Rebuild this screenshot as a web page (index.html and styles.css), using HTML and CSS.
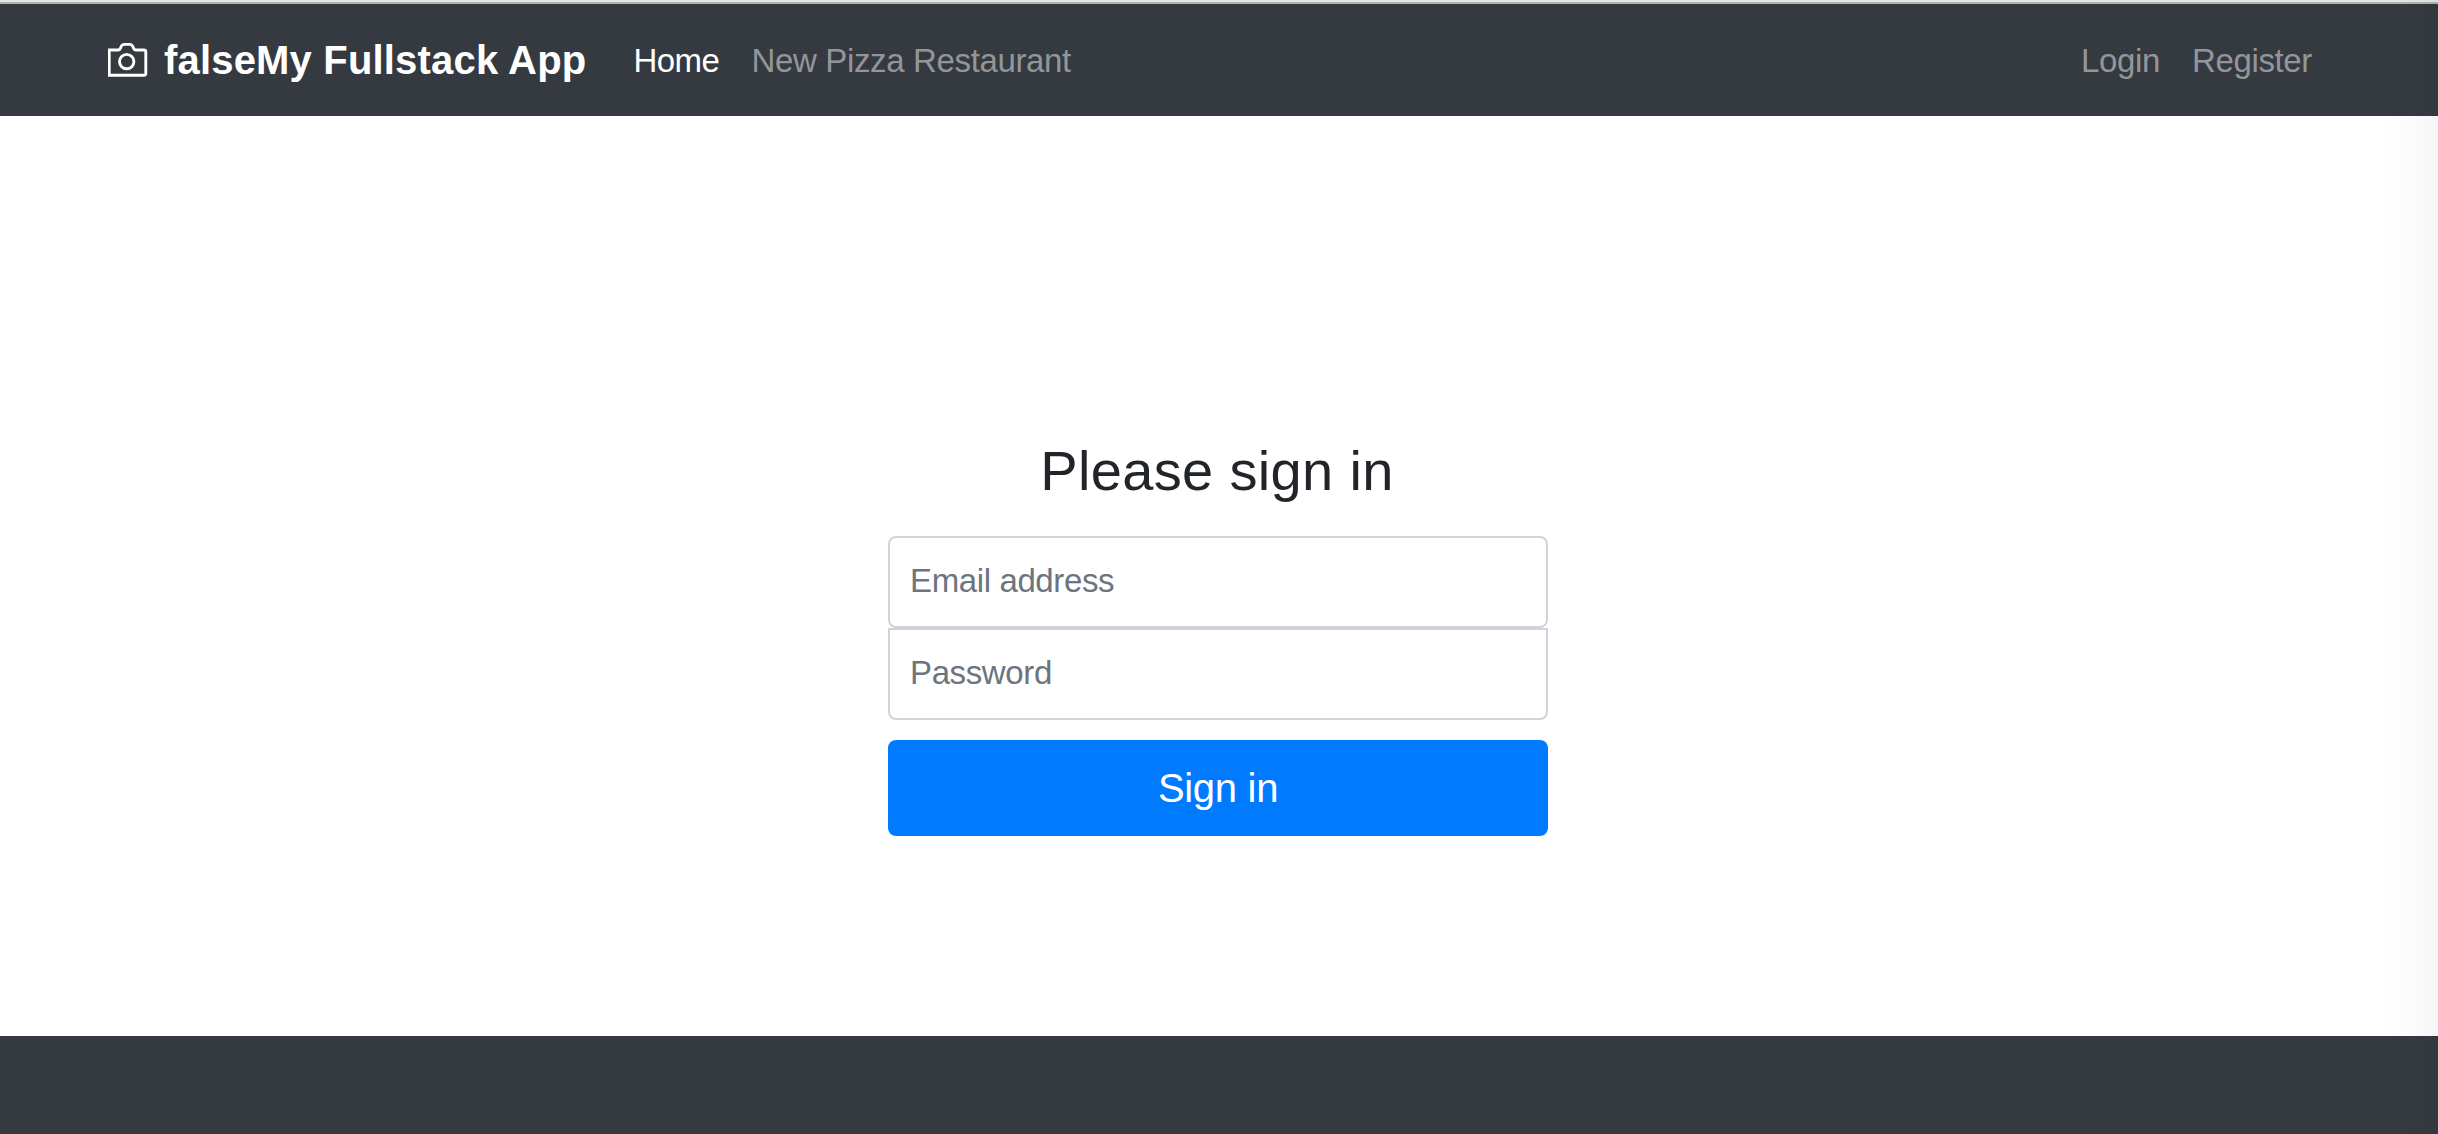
FILE: index.html
```html
<!DOCTYPE html>
<html lang="en">
<head>
<meta charset="utf-8">
<title>My Fullstack App</title>
<link rel="stylesheet" href="styles.css">
</head>
<body>
<header class="navbar">
  <a class="brand">
    <svg class="brand-icon" viewBox="0 0 40 40" fill="none" stroke="currentColor" stroke-width="2.900"><path d="M1.200 11h9c2 0 2-1.500 2.700-3 .8-2 1.600-2.600 3.400-2.600h5.400c1.800 0 2.600.6 3.400 2.600.7 1.500.7 3 2.700 3h8c1.300 0 2 .7 2 2v21.500c0 1.200-.6 1.700-1.800 1.700H1.200z"/><circle cx="18.700" cy="22.600" r="7.200"/></svg>
    <strong class="brand-name">falseMy Fullstack App</strong>
  </a>
  <nav class="nav nav-main">
    <a class="nav-link active">Home</a>
    <a class="nav-link">New Pizza Restaurant</a>
  </nav>
  <nav class="nav">
    <a class="nav-link">Login</a>
    <a class="nav-link">Register</a>
  </nav>
</header>
<main class="content">
  <form class="form-signin">
    <h1 class="title">Please sign in</h1>
    <input class="field" type="email" placeholder="Email address">
    <input class="field field-last" type="password" placeholder="Password">
    <button class="submit" type="button">Sign in</button>
  </form>
</main>
<footer class="footer"></footer>
<div class="edge-shade"></div>
</body>
</html>
```
FILE: styles.css
```css
* { box-sizing: border-box; }
body {
  margin: 0;
  height: 1134px;
  display: flex;
  flex-direction: column;
  overflow: hidden;
  border-top: 2px solid #e6e7e5;
  background: #fff;
  color: #212529;
  font: 33px/48px "Liberation Sans", Arial, sans-serif;
}
.navbar {
  height: 114px;
  flex: none;
  display: flex;
  align-items: center;
  padding: 0 110px 0 108px;
  background: #343a40;
  border-top: 2px solid #b1b3ad;
}
.brand {
  display: flex;
  align-items: center;
  gap: 16px;
  margin-right: 31px;
  color: #fff;
}
.brand-icon { width: 40px; height: 40px; margin-bottom: 2px; }
.brand-name {
  font-size: 40px;
  line-height: 60px;
  letter-spacing: .18px;
  white-space: nowrap;
}
.nav { display: flex; padding-top: 2px; }
.nav-main { margin-right: auto; }
.nav-link {
  padding: 0 16px;
  color: rgba(255, 255, 255, .48);
  letter-spacing: -.35px;
  white-space: nowrap;
}
.nav-link.active { color: #fff; letter-spacing: -.5px; }
.content {
  flex: 1;
  display: flex;
  justify-content: center;
  align-items: flex-start;
  padding-top: 321px;
}
.form-signin {
  width: 660px;
  margin-right: 2px;
  display: flex;
  flex-direction: column;
}
.title {
  margin: 0 2px 32px 0;
  font-size: 56px;
  line-height: 67px;
  font-weight: 400;
  letter-spacing: .35px;
  text-align: center;
}
.field {
  width: 100%;
  height: 92px;
  margin: 0;
  padding: 0 20px 2px;
  border: 2px solid #ced4da;
  border-radius: 8px;
  background: #fff;
  font: inherit;
  letter-spacing: -.38px;
}
.field::placeholder { color: #6c757d; opacity: 1; }
.field-last {
  margin-bottom: 20px;
  border-radius: 0 0 8px 8px;
}
.submit {
  height: 96px;
  padding: 0;
  border: 0;
  border-radius: 8px;
  background: #007bff;
  color: #fff;
  font: 40px/60px "Liberation Sans", Arial, sans-serif;
  letter-spacing: -.3px;
}
.footer { flex: none; height: 98px; background: #343a40; }
.edge-shade {
  position: absolute;
  top: 0;
  right: 0;
  width: 60px;
  height: 1134px;
  background: linear-gradient(to right, transparent, rgba(0, 0, 0, .01) 50%, rgba(0, 0, 0, .035));
  pointer-events: none;
}
```
